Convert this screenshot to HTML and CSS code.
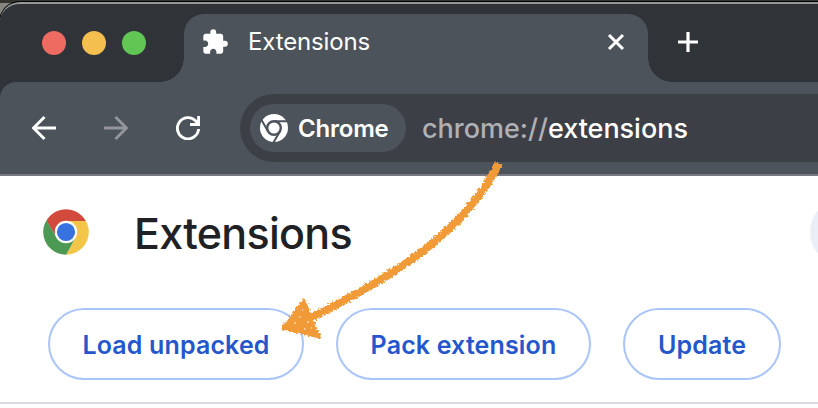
FILE: index.html
```html
<!DOCTYPE html>
<html lang="en">
<head>
<meta charset="utf-8">
<title>Extensions</title>
<link rel="stylesheet" href="styles.css">
</head>
<body>
<div class="window">
  <header class="tabstrip">
    <div class="lights"><i class="red"></i><i class="yellow"></i><i class="green"></i></div>
    <div class="tab">
      <svg class="puzzle" width="28" height="28" viewBox="0 0 24 24" fill="#fff"><path d="M20.500 11H19V7c0-1.100-.9-2-2-2h-4V3.500a2.500 2.500 0 0 0-5 0V5H4c-1.100 0-1.990.9-1.990 2v3.800H3.500c1.490 0 2.700 1.210 2.700 2.700s-1.210 2.700-2.700 2.700H2V20c0 1.100.9 2 2 2h3.800v-1.500c0-1.490 1.210-2.700 2.700-2.700s2.700 1.210 2.700 2.700V22H17c1.100 0 2-.9 2-2v-4h1.500a2.500 2.500 0 0 0 0-5z"/></svg>
      <span class="tab-title">Extensions</span>
      <svg class="close" width="18" height="18" viewBox="0 0 18 18"><path d="M2 2 16 16M16 2 2 16" stroke="#fff" stroke-width="3"/></svg>
    </div>
    <svg class="plus" width="20" height="20" viewBox="0 0 20 20"><path d="M10 0V20M0 10H20" stroke="#fff" stroke-width="3.200"/></svg>
  </header>
  <nav class="toolbar">
    <svg class="nav" width="24" height="24" viewBox="0 0 24 24"><path d="M24 12H2M12.500 1 1.500 12 12.500 23" fill="none" stroke="#fff" stroke-width="2.900"/></svg>
    <svg class="nav" width="24" height="24" viewBox="0 0 24 24"><path d="M0 12H22M11.500 1 22.500 12 11.500 23" fill="none" stroke="#94969c" stroke-width="2.900"/></svg>
    <svg class="nav" width="24" height="24" viewBox="0 0 24 24"><path d="M22.600 13A10.600 10.600 0 1 1 19.800 5L22 8M22.600 0V8.500H14" fill="none" stroke="#fff" stroke-width="2.900"/></svg>
    <div class="omnibox">
      <div class="chip">
        <svg width="28" height="28" viewBox="0 0 28 28"><circle cx="14" cy="14" r="14" fill="#fff"/><path d="M14 7.200H28M19.900 17.400 12.900 29.500M8.100 17.400 1.100 5.300" stroke="#4c535b" stroke-width="2"/><circle cx="14" cy="14" r="6.800" fill="#fff" stroke="#4c535b" stroke-width="2.400"/></svg>
        <span>Chrome</span>
      </div>
      <span class="url"><span class="scheme">chrome://</span>extensions</span>
    </div>
  </nav>
  <main>
    <div class="heading">
      <svg width="46" height="46" viewBox="0 0 46 46">
        <defs><clipPath id="disc"><circle cx="23" cy="23" r="22.800"/></clipPath></defs>
        <g clip-path="url(#disc)">
          <path d="M0 0H46V12H23L13.500 28.500 3 11z" fill="#d14a3b"/>
          <path d="M23 12H46V46H23L32.500 28.500z" fill="#f3c548"/>
          <path d="M3.500 11.500 13.500 28.500H32.500L22.500 47H0V11z" fill="#4b9953"/>
        </g>
        <circle cx="23" cy="23" r="11.200" fill="#fff"/><circle cx="23" cy="23" r="9.100" fill="#3871e0"/>
      </svg>
      <h1>Extensions</h1>
      <div class="search"></div>
    </div>
    <div class="actions">
      <button class="load">Load unpacked</button>
      <button class="pack">Pack extension</button>
      <button class="update">Update</button>
    </div>
  </main>
</div>
<svg class="arrow" width="240" height="200" viewBox="270 150 240 200">
  <defs><filter id="crayon" x="-10%" y="-10%" width="120%" height="120%">
    <feTurbulence type="fractalNoise" baseFrequency="0.45" numOctaves="2" seed="4" result="n"/>
    <feDisplacementMap in="SourceGraphic" in2="n" scale="6" xChannelSelector="R" yChannelSelector="G"/>
  </filter></defs>
  <g filter="url(#crayon)">
    <path d="M499 163C468 225 408 270 310 318" fill="none" stroke="#f19a37" stroke-width="8"/>
    <path d="M283 328 304 300 319 337z" fill="#f19a37" stroke="#f19a37" stroke-width="3" stroke-linejoin="round"/>
  </g>
  <path d="M294 323h2M299 317h1.500M307 322h2M304 329h1.500M311 328h1M302 310h1" stroke="#fbdcb9" stroke-width="1.300"/>
</svg>
</body>
</html>
```
FILE: styles.css
```css
* { box-sizing: border-box; }
body { margin: 0; width: 818px; height: 408px; overflow: hidden; background: linear-gradient(#34342f 0 3px, transparent 3px), #85857e; font-family: Inter, "Liberation Sans", sans-serif; }
svg { display: block; flex: none; }
.window { margin-top: 2px; height: 406px; width: 838px; border-top: 2px solid #96999a; border-radius: 20px 0 0; background: #303338; box-shadow: 0 0 0 1px #000; overflow: hidden; }
.tabstrip { height: 78px; display: flex; align-items: flex-start; }
.lights { display: flex; gap: 16px; margin: 27px 0 0 42px; }
.lights i { width: 24px; height: 24px; border-radius: 50%; }
.red { background: #ed6b60; }
.yellow { background: #f5bf4f; }
.green { background: #62c655; }
.tab { position: relative; margin: 10px 0 0 38px; width: 464px; height: 68px; display: flex; align-items: center; padding: 0 23px 12px 17px; border-radius: 20px 20px 0 0; background: #4c535b; color: #fff; }
.tab::before, .tab::after { content: ""; position: absolute; bottom: 0; width: 24px; height: 24px; }
.tab::before { right: 100%; background: radial-gradient(circle at 0 0, transparent 23.500px, #4c535b 24px); }
.tab::after { left: 100%; background: radial-gradient(circle at 100% 0, transparent 23.500px, #4c535b 24px); }
.tab-title { margin-left: 19px; flex: 1; font-size: 24px; line-height: 30px; letter-spacing: -.15px; }
.plus { margin: 28px 0 0 30px; }
.toolbar { height: 94px; display: flex; align-items: center; padding-left: 32px; background: #4c535b; border-bottom: 2px solid #777883; border-radius: 16px 0 0; }
.nav { margin-right: 48px; }
.omnibox { flex: 1; height: 68px; margin-left: -8px; padding-left: 10px; display: flex; align-items: center; border-radius: 34px 0 0 34px; background: #3d3f47; }
.chip { width: 156px; height: 48px; border-radius: 24px; background: #4c535b; display: flex; align-items: center; gap: 10px; padding-left: 10px; color: #fff; font-size: 24px; font-weight: 600; letter-spacing: -.2px; }
.url { margin-left: 16px; font-size: 27px; font-weight: 450; letter-spacing: -.02px; color: #fff; white-space: nowrap; }
.scheme { color: #b0b1b5; }
main { background: #fff; height: 232px; }
.heading { height: 132px; padding: 0 0 20px 43px; display: flex; align-items: center; }
h1 { margin: 2px 0 0 45px; flex: 1; font-size: 43px; line-height: 52px; font-weight: 550; color: #202124; letter-spacing: -.7px; }
.search { width: 68px; height: 68px; margin-right: -40px; border-radius: 34px; background: #ebeef7; }
.actions { height: 96px; border-bottom: 2px solid #dadbe0; display: flex; gap: 32px; padding-left: 48px; }
button { height: 72px; padding: 2px 0 0; border: 2px solid #aac5f8; border-radius: 36px; background: #fff; color: #2457cc; font: 600 25px Inter, sans-serif; letter-spacing: .15px; }
.load { width: 256px; }
.pack { width: 255px; }
.update { width: 158px; }
.arrow { position: absolute; left: 270px; top: 150px; }
```
